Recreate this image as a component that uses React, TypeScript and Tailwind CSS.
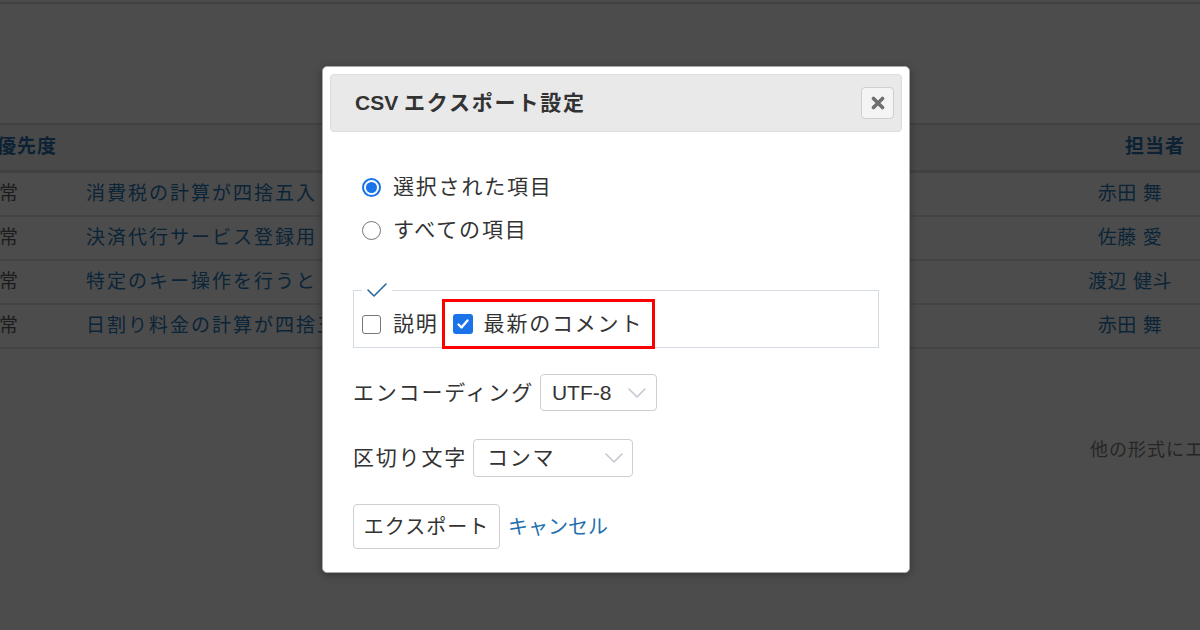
import React from "react";

const FONT = '"Liberation Sans", "Noto Sans CJK JP", sans-serif';

const rows = [
  { p: "通常", t: "消費税の計算が四捨五入", n: "赤田 舞" },
  { p: "通常", t: "決済代行サービス登録用", n: "佐藤 愛" },
  { p: "通常", t: "特定のキー操作を行うと", n: "渡辺 健斗" },
  { p: "通常", t: "日割り料金の計算が四捨五", n: "赤田 舞" },
];

function Radio({ checked }: { checked?: boolean }) {
  return checked ? (
    <span className="flex h-[19px] w-[19px] shrink-0 items-center justify-center rounded-full border-2 border-[#1a73e8] bg-white">
      <span className="h-[11px] w-[11px] rounded-full bg-[#1a73e8]" />
    </span>
  ) : (
    <span className="h-[19px] w-[19px] shrink-0 rounded-full border-[1.5px] border-[#767676] bg-white" />
  );
}

function Check({ checked }: { checked?: boolean }) {
  return checked ? (
    <span className="flex h-[20px] w-[20px] shrink-0 items-center justify-center rounded-[3px] bg-[#1a73e8]">
      <svg width="14" height="14" viewBox="0 0 14 14" fill="none">
        <path d="M2.5 7.5 L5.5 10.5 L11.5 3.5" stroke="white" strokeWidth="2.4" strokeLinecap="round" strokeLinejoin="round" />
      </svg>
    </span>
  ) : (
    <span className="h-[19px] w-[19px] shrink-0 rounded-[3px] border-[1.5px] border-[#767676] bg-white" />
  );
}

function Chevron() {
  return (
    <svg width="20" height="12" viewBox="0 0 20 12" fill="none">
      <path d="M2 2 L10 10 L18 2" stroke="#c4c7d0" strokeWidth="1.6" strokeLinecap="round" strokeLinejoin="round" />
    </svg>
  );
}

export default function App() {
  return (
    <div
      className="relative h-[630px] w-[1200px] overflow-hidden bg-[#4c4c4c] text-[#333]"
      style={{ fontFamily: FONT }}
    >
      {/* dimmed page */}
      <div className="flex h-full flex-col">
        <div className="mt-[2px] h-[2px] w-full bg-[#424242]" />
        <div className="mt-[119px] ml-[-24px] w-[1224px] border-t-2 border-[#414141]">
          <div className="flex h-[48px] items-center border-b-[3px] border-[#424242] bg-[#494949] text-[19px] font-bold tracking-[1px] text-[#0c2234]">
            <div className="w-[110px] pl-[21px]">優先度</div>
            <div className="flex-1" />
            <div className="w-[200px] pr-[15px] text-right">担当者</div>
          </div>
          {rows.map((r, i) => (
            <div
              key={i}
              className="flex h-[44px] items-center border-b-2 border-[#444] text-[19px] tracking-[2px]"
            >
              <div className="w-[110px] pl-[2px] text-[#1c1c1c]">{r.p}</div>
              <div className="flex-1 whitespace-nowrap text-[#0b2437]">{r.t}</div>
              <div className="w-[140px] text-center tracking-[0.5px] text-[#0b2437]">{r.n}</div>
            </div>
          ))}
        </div>
        <div className="mt-[88px] whitespace-nowrap pl-[1090px] text-[18px] tracking-[1px] text-[#262626]">
          他の形式にエクスポート
        </div>
      </div>

      {/* modal */}
      <div className="absolute left-[322px] top-[66px] flex h-[507px] w-[588px] flex-col rounded-[5px] border border-[#a8a8a8] bg-white p-[7px] shadow-[0_2px_8px_rgba(0,0,0,0.3)]">
        <div className="flex h-[58px] items-center justify-between rounded-[4px] border border-[#dcdcdc] bg-[#e9e9e9] pl-[24px] pr-[7px]">
          <div className="text-[21px] font-bold text-[#333]">
            <span className="tracking-[0px]">CSV </span>
            <span className="tracking-[1.8px]">エクスポート設定</span>
          </div>
          <div className="flex h-[32px] w-[33px] items-center justify-center rounded-[4px] border border-[#cfcfcf] bg-[#f4f4f4]">
            <svg width="14" height="14" viewBox="0 0 14 14">
              <path d="M2.5 2.5 L11.5 11.5 M11.5 2.5 L2.5 11.5" stroke="#6f6f6f" strokeWidth="3.6" strokeLinecap="round" />
            </svg>
          </div>
        </div>

        <div className="flex flex-col pl-[23px] pr-[23px] text-[21px] tracking-[1.8px]">
          <label className="mt-[40px] flex h-[30px] items-center gap-[12px] pl-[9px]">
            <Radio checked />
            <span>選択された項目</span>
          </label>
          <label className="mt-[13px] flex h-[30px] items-center gap-[12px] pl-[9px]">
            <Radio />
            <span>すべての項目</span>
          </label>

          <fieldset className="mt-[37px] h-[66px] w-[526px] border border-[#d6dce3] px-[8px]">
            <legend className="px-[3px]">
              <svg width="24" height="16" viewBox="0 0 24 16" fill="none" className="block">
                <path d="M3 8 L9 14 L21 2" stroke="#2a6a9e" strokeWidth="1.6" strokeLinecap="round" strokeLinejoin="round" />
              </svg>
            </legend>
            <div className="mt-[1px] flex items-center">
              <Check />
              <span className="ml-[12px]">説明</span>
              <div className="ml-[3px] flex h-[50px] w-[213px] items-center border-[3px] border-[#ff0000] pl-[8px]">
                <Check checked />
                <span className="ml-[11px] whitespace-nowrap">最新のコメント</span>
              </div>
            </div>
          </fieldset>

          <div className="mt-[26px] flex items-center">
            <span>エンコーディング</span>
            <div className="ml-[6px] flex h-[37px] w-[117px] items-center justify-between rounded-[4px] border border-[#cfcfcf] pl-[11px] pr-[9px]">
              <span className="tracking-[0px]">UTF-8</span>
              <Chevron />
            </div>
          </div>

          <div className="mt-[28px] flex items-center">
            <span>区切り文字</span>
            <div className="ml-[6px] flex h-[38px] w-[160px] items-center justify-between rounded-[4px] border border-[#cfcfcf] pl-[13px] pr-[8px]">
              <span>コンマ</span>
              <Chevron />
            </div>
          </div>

          <div className="mt-[27px] flex items-center">
            <button className="flex h-[45px] w-[147px] items-center justify-center rounded-[4px] border border-[#cfcfcf] bg-white text-[20px] tracking-[1px] text-[#333]">
              エクスポート
            </button>
            <span className="ml-[8px] text-[20px] tracking-[0px] text-[#1f6fae]">キャンセル</span>
          </div>
        </div>
      </div>
    </div>
  );
}
